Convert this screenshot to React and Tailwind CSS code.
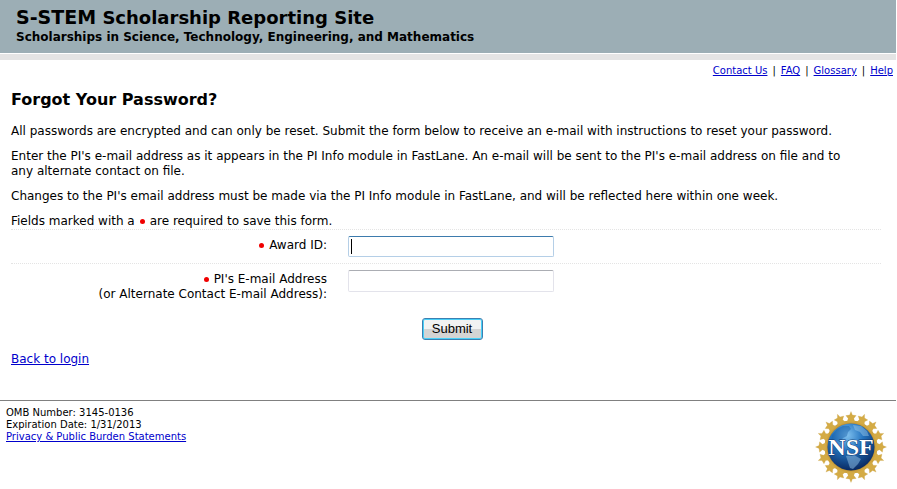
const STAR_ANGLES = Array.from({ length: 16 }, (_, i) => i * 22.5);

function RequiredDot() {
  return <span className="mx-[5px] inline-block size-[5px] rounded-full bg-[#f00000] align-middle" />;
}

function NsfLogo() {
  return (
    <svg viewBox="0 0 72 72" className="size-[72px] shrink-0" role="img" aria-label="NSF">
      <defs>
        <radialGradient id="globe" cx="0.42" cy="0.25" r="0.75">
          <stop offset="0" stopColor="#7fc0ee" />
          <stop offset="0.45" stopColor="#2474c0" />
          <stop offset="1" stopColor="#0a2a62" />
        </radialGradient>
      </defs>
      <circle cx="36" cy="36" r="26.5" fill="#cfa43f" />
      {STAR_ANGLES.map((angle) => (
        <path
          key={angle}
          transform={`rotate(${angle} 36 36)`}
          d="M36 0.5 L37.4 4 L41.2 4.6 L38.8 7.4 Q39 9.6 41 11 L31 11 Q33 9.6 33.2 7.4 L30.8 4.6 L34.6 4 Z"
          fill="#d4ab45"
          stroke="#c49b3c"
          strokeWidth="0.2"
        />
      ))}
      <circle cx="36" cy="36" r="24" fill="#b78b31" />
      <circle cx="36" cy="36" r="23.5" fill="url(#globe)" />
      <path d="M17 24 L22 18 L28 15 L34 15 L36 18 L33 21 L32 25 L28 27 L25 31 L21 29 L16 31 Z" fill="#0f559f" opacity="0.4" />
      <path d="M38 14 L46 15 L52 20 L54 25 L48 25 L45 21 L40 19 Z" fill="#b0d6f0" opacity="0.4" />
      <path d="M31 45 L39 44 L46 48 L43 53 L38 58 L35 57 L33 51 Z" fill="#7eaed6" opacity="0.6" />
      <text x="36" y="44" textAnchor="middle" fontFamily="Liberation Serif, serif" fontWeight="bold" fontSize="24" fill="#fff" stroke="#123a70" strokeWidth="1" paintOrder="stroke">
        NSF
      </text>
    </svg>
  );
}

export default function App() {
  const link = "text-[#0000cc] underline";

  return (
    <div className="bg-white font-['DejaVu_Sans',sans-serif] text-[12px] leading-[15px] text-black">
      <header className="mr-px bg-[#9caeb5] px-4 pt-[5px] pb-[9px] font-bold">
        <h1 className="text-[18px] leading-6">
          <span className="text-[19px]">S-STEM</span> Scholarship Reporting Site
        </h1>
        <p className="leading-[14px]">Scholarships in Science, Technology, Engineering, and Mathematics</p>
      </header>
      <div className="mt-px mr-px h-[6px] bg-[#e4e4e4]" />

      <nav className="flex justify-end gap-[5px] pt-1 pr-1 text-[10px] leading-[14px]">
        <a href="#contact" className={link}>Contact Us</a>
        <span>|</span>
        <a href="#faq" className={link}>FAQ</a>
        <span>|</span>
        <a href="#glossary" className={link}>Glossary</a>
        <span>|</span>
        <a href="#help" className={link}>Help</a>
      </nav>

      <main className="pt-3 pr-4 pl-[11px]">
        <h2 className="text-[16px] leading-5 font-bold">Forgot Your Password?</h2>
        <div className="flex flex-col gap-[10px] pt-[14px] pr-6">
          <p>
            All passwords are encrypted and can only be reset. Submit the form below to receive an e-mail with
            instructions to reset your password.
          </p>
          <p>
            Enter the PI's e-mail address as it appears in the PI Info module in FastLane. An e-mail will be sent to
            the PI's e-mail address on file and to any alternate contact on file.
          </p>
          <p>
            Changes to the PI's email address must be made via the PI Info module in FastLane, and will be reflected
            here within one week.
          </p>
          <p>
            Fields marked with a<RequiredDot />are required to save this form.
          </p>
        </div>

        <form onSubmit={(e) => e.preventDefault()}>
          <div className="flex gap-[21px] border-t border-dotted border-[#e4e4e4] pt-[6px] pb-[6px]">
            <label htmlFor="award" className="w-[316px] pt-[2px] text-right">
              <RequiredDot />Award ID:
            </label>
            <div className="relative flex">
              <input
                id="award"
                type="text"
                placeholder=" "
                autoFocus
                className="peer h-[21px] w-[206px] rounded-[2px] border border-[#b5cfe7] border-t-[#3d7bad] px-[2px] outline-none placeholder-shown:caret-transparent"
              />
              {/* text cursor while the field is empty and focused */}
              <span className="pointer-events-none absolute top-[3px] left-[3px] hidden h-[15px] w-px bg-black peer-placeholder-shown:peer-focus:block" />
            </div>
          </div>
          <div className="flex gap-[21px] border-t border-dotted border-[#e4e4e4] pt-[6px]">
            <label htmlFor="email" className="w-[316px] pt-[2px] text-right">
              <RequiredDot />PI's E-mail Address
              <br />
              (or Alternate Contact E-mail Address):
            </label>
            <input
              id="email"
              type="text"
              className="h-[22px] w-[206px] rounded-[2px] border border-[#e3e3eb] border-t-[#abadb3] px-[2px] outline-none"
            />
          </div>
          <div className="flex justify-center pt-4 pl-3">
            <button
              type="submit"
              className="h-[22px] w-[61px] rounded-[3px] border border-[#3c7fb1] bg-linear-to-b from-[#f2f2f2] from-50% to-[#d4d4d4] to-50% font-['Liberation_Sans',sans-serif] text-[13px] leading-[18px] inset-ring inset-ring-[#48d0f8]"
            >
              Submit
            </button>
          </div>
        </form>

        <p className="pt-3">
          <a href="#login" className={link}>Back to login</a>
        </p>
      </main>

      <footer className="mt-[33px] mr-px flex items-start justify-between border-t border-[#808080] pt-[6px] pr-[9px] pl-[6px] text-[10px] leading-3">
        <div>
          <p>OMB Number: 3145-0136</p>
          <p>Expiration Date: 1/31/2013</p>
          <a href="#privacy" className={link}>Privacy &amp; Public Burden Statements</a>
        </div>
        <div className="pt-1">
          <NsfLogo />
        </div>
      </footer>
    </div>
  );
}
